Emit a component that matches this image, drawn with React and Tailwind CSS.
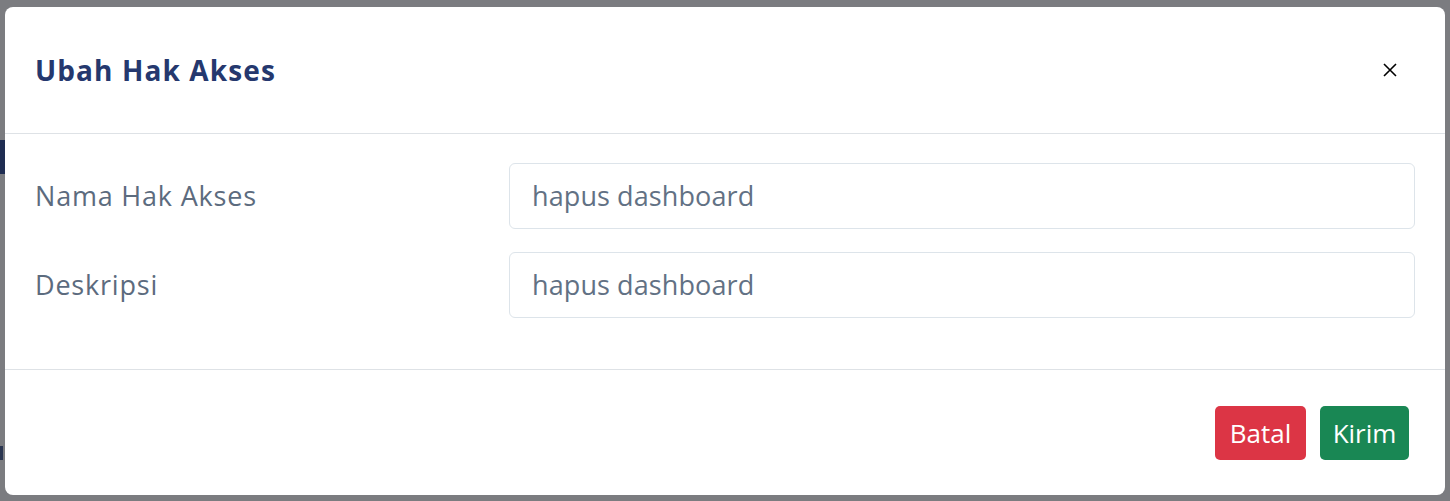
import React from "react";

const font = { fontFamily: '"Open Sans", "Noto Sans", sans-serif' };

export default function App() {
  return (
    <div className="relative w-[1450px] h-[501px] bg-[#7b7c80] overflow-hidden" style={font}>
      <div className="absolute left-0 top-[140px] w-[5px] h-[34px] bg-[#1f2d52]" />
      <div className="absolute left-0 top-[446px] w-[3px] h-[14px] bg-[#2a3550]" />
      <div className="absolute left-[5px] top-[7px] w-[1440px] h-[488px] bg-white rounded-[8px] flex flex-col">
        <div className="h-[127px] flex items-center justify-between pl-[30px] pr-[48px] border-b border-[#dee2e6]">
          <h1 className="text-[28px] font-bold tracking-[1.1px] text-[#25386e] leading-none">Ubah Hak Akses</h1>
          <svg width="14" height="14" viewBox="0 0 14 14" className="text-black">
            <path d="M1 1 L13 13 M13 1 L1 13" stroke="currentColor" strokeWidth="1.6" />
          </svg>
        </div>
        <div className="pt-[29px] pb-[51px] px-[30px] flex flex-col gap-[23px] border-b border-[#dee2e6]">
          <div className="flex items-center">
            <label className="w-[474px] text-[27px] tracking-[0.8px] text-[#5c6b7e]">Nama Hak Akses</label>
            <div className="flex-1 h-[66px] border border-[#dde4ea] rounded-[6px] flex items-center px-[22px] text-[27px] tracking-[0.1px] text-[#627184]">
              hapus dashboard
            </div>
          </div>
          <div className="flex items-center">
            <label className="w-[474px] text-[27px] tracking-[0.8px] text-[#5c6b7e]">Deskripsi</label>
            <div className="flex-1 h-[66px] border border-[#dde4ea] rounded-[6px] flex items-center px-[22px] text-[27px] tracking-[0.1px] text-[#627184]">
              hapus dashboard
            </div>
          </div>
        </div>
        <div className="flex-1 flex items-start justify-end pt-[36px] pr-[36px] gap-[14px]">
          <button className="w-[91px] h-[54px] rounded-[5px] bg-[#dc3545] text-white text-[26px] flex items-center justify-center">Batal</button>
          <button className="w-[89px] h-[54px] rounded-[5px] bg-[#198754] text-white text-[26px] flex items-center justify-center">Kirim</button>
        </div>
      </div>
    </div>
  );
}
